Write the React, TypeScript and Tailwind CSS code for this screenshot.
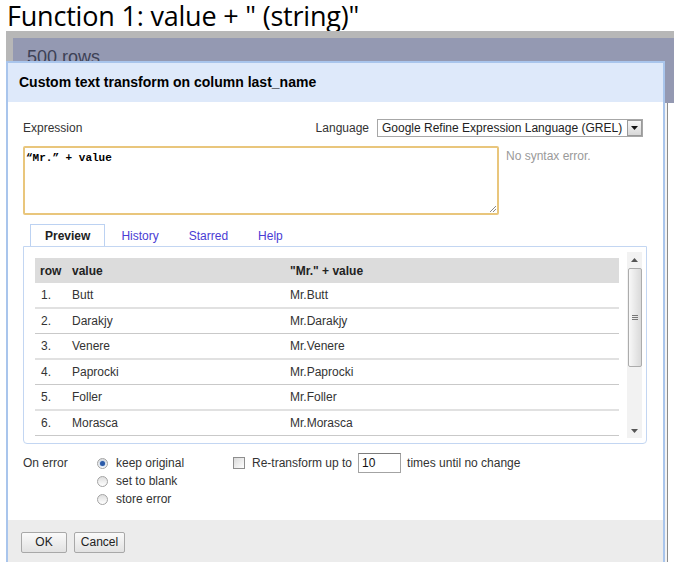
import React from 'react';

const rows = [
  { n: '1.', v: 'Butt' },
  { n: '2.', v: 'Darakjy' },
  { n: '3.', v: 'Venere' },
  { n: '4.', v: 'Paprocki' },
  { n: '5.', v: 'Foller' },
  { n: '6.', v: 'Morasca' },
];

const Radio: React.FC<{ checked?: boolean; label: string }> = ({ checked, label }) => (
  <div className="flex items-center h-[18px]">
    <div className="w-[11px] h-[11px] rounded-full border border-[#a3a3a3] bg-gradient-to-b from-[#dedede] to-white flex items-center justify-center">
      {checked && <div className="w-[5px] h-[5px] rounded-full bg-[#2b5aa8] shadow-[0_0_2px_#6fa0e0]" />}
    </div>
    <span className="ml-[8px]">{label}</span>
  </div>
);

const Scrollbar: React.FC = () => (
  <div className="w-[15px] h-[186px] bg-[#f2f2f2] flex flex-col items-center">
    <div className="h-[16px] w-full flex items-center justify-center">
      <svg width="7" height="4" viewBox="0 0 7 4"><path d="M0 4 L3.5 0 L7 4 Z" fill="#555" /></svg>
    </div>
    <div className="h-[99px] w-[14px] border border-[#acacac] rounded-[2px] bg-gradient-to-r from-[#f8f8f8] to-[#dadada] flex items-center justify-center">
      <div className="flex flex-col gap-[1px]">
        <div className="w-[6px] h-[1px] bg-[#777]" />
        <div className="w-[6px] h-[1px] bg-[#777]" />
        <div className="w-[6px] h-[1px] bg-[#777]" />
      </div>
    </div>
    <div className="flex-1" />
    <div className="h-[14px] w-full flex items-center justify-center">
      <svg width="7" height="4" viewBox="0 0 7 4"><path d="M0 0 L3.5 4 L7 0 Z" fill="#555" /></svg>
    </div>
  </div>
);

const App: React.FC = () => {
  return (
    <div className="w-[674px] h-[562px] bg-white overflow-hidden font-['Liberation_Sans',Arial,sans-serif] text-[12px] text-[#333]">
      <div className="h-[31px] pl-[7px] flex items-center text-[27px] text-black font-['Open_Sans',sans-serif] tracking-[-0.2px] whitespace-nowrap">
        <span className="leading-none">Function 1: value + " (string)"</span>
      </div>

      <div className="relative ml-[6px] h-[531px] bg-[#b7b7b7] pt-[7px]">
        <div className="ml-[7px] h-[65px] bg-[#9499b2] pl-[14px] pt-[9px] text-[18px] leading-[20px] text-[#3d4156]">
          500 rows
        </div>
        <div className="ml-[7px] h-[459px] bg-[#f3f3f3] flex justify-end">
          <div className="w-[7px] h-full border-l border-[#8c8c8c] bg-white" />
        </div>

        <div className="absolute left-0 top-[30px] w-[659px] h-[501px] border-2 border-b-0 border-[#a9c5ec] bg-white flex flex-col">
          <div className="h-[39px] shrink-0 bg-[#dee9fa] flex items-center pl-[11px] text-[14px] font-bold text-black">
            Custom text transform on column last_name
          </div>

          <div className="h-[418px] shrink-0 pl-[15px] pr-[16px] pt-[17px]">
            <div className="flex items-center justify-between h-[18px] pr-[4px]">
              <span>Expression</span>
              <div className="flex items-center">
                <span className="mr-[8px]">Language</span>
                <div className="w-[266px] h-[18px] border border-[#a7a7a7] flex items-center justify-between">
                  <span className="pl-[4px] text-[#222]">Google Refine Expression Language (GREL)</span>
                  <div className="w-[15px] h-[16px] border border-[#9a9a9a] bg-gradient-to-b from-[#f6f6f6] to-[#d8d8d8] flex items-center justify-center">
                    <svg width="7" height="4" viewBox="0 0 7 4"><path d="M0 0 L3.5 4 L7 0 Z" fill="#111" /></svg>
                  </div>
                </div>
              </div>
            </div>

            <div className="flex items-start mt-[9px]">
              <div className="relative w-[476px] h-[69px] border-2 border-[#e9c67c] rounded-[2px] pl-[1px] pt-[3px] font-['Liberation_Mono',monospace] text-[11px] leading-[14px] text-black font-bold">
                “Mr.” + value
                <svg className="absolute right-[1px] bottom-[1px]" width="7" height="7" viewBox="0 0 7 7">
                  <path d="M1 7 L7 1 M4 7 L7 4" stroke="#888" strokeWidth="1" />
                </svg>
              </div>
              <span className="ml-[7px] mt-[1px] text-[#9a9a9a]">No syntax error.</span>
            </div>

            <div className="flex items-end mt-[10px] pl-[7px] h-[21px] gap-[2px] relative z-10">
              <div className="h-[22px] px-[14px] border border-b-0 border-[#bcd2f2] bg-white flex items-center font-bold text-[#222]">
                Preview
              </div>
              <div className="h-[21px] px-[14px] flex items-center text-[#4a3cd4]">History</div>
              <div className="h-[21px] px-[14px] flex items-center text-[#4a3cd4]">Starred</div>
              <div className="h-[21px] px-[14px] flex items-center text-[#4a3cd4]">Help</div>
            </div>

            <div className="h-[198px] border border-[#c3d6f2] rounded-b-[4px] flex items-start pl-[11px] overflow-hidden">
              <div className="w-[584px] mt-[11px]">
                <div className="h-[25px] bg-[#dcdcdc] flex items-center font-bold text-[#222]">
                  <span className="w-[37px] pl-[5px]">row</span>
                  <span className="w-[218px]">value</span>
                  <span>"Mr." + value</span>
                </div>
                {rows.map((r, i) => (
                  <div
                    key={r.n}
                    className={
                      i % 2 === 0
                        ? 'h-[26px] border-b-2 border-[#e1e1e1] flex items-center'
                        : 'h-[25px] border-b border-[#c9c9c9] flex items-center'
                    }
                  >
                    <span className="w-[37px] pl-[6px]">{r.n}</span>
                    <span className="w-[218px]">{r.v}</span>
                    <span>Mr.{r.v}</span>
                  </div>
                ))}
              </div>
              <div className="ml-[8px] mt-[5px]">
                <Scrollbar />
              </div>
            </div>

            <div className="flex items-start mt-[10px]">
              <div className="w-[74px] h-[18px] flex items-center">On error</div>
              <div className="w-[136px] flex flex-col">
                <Radio checked label="keep original" />
                <Radio label="set to blank" />
                <Radio label="store error" />
              </div>
              <div className="flex items-center h-[20px] -mt-[1px]">
                <div className="w-[12px] h-[12px] border border-[#8e8e8e] bg-gradient-to-br from-[#dadada] to-white" />
                <span className="ml-[7px]">Re-transform up to</span>
                <div className="ml-[6px] w-[43px] h-[20px] border border-[#a3a3a3] border-t-[#7d7d7d] pl-[3px] flex items-center text-[#111]">
                  10
                </div>
                <span className="ml-[6px]">times until no change</span>
              </div>
            </div>
          </div>

          <div className="flex-1 bg-[#ececec] flex items-center pl-[13px] gap-[7px] pt-[2px]">
            <div className="w-[46px] h-[21px] border border-[#a8a8a8] rounded-[2px] bg-gradient-to-b from-[#fafafa] to-[#e2e2e2] flex items-center justify-center text-[#222]">
              OK
            </div>
            <div className="w-[51px] h-[21px] border border-[#a8a8a8] rounded-[2px] bg-gradient-to-b from-[#fafafa] to-[#e2e2e2] flex items-center justify-center text-[#222]">
              Cancel
            </div>
          </div>
        </div>
      </div>
    </div>
  );
};

export default App;
